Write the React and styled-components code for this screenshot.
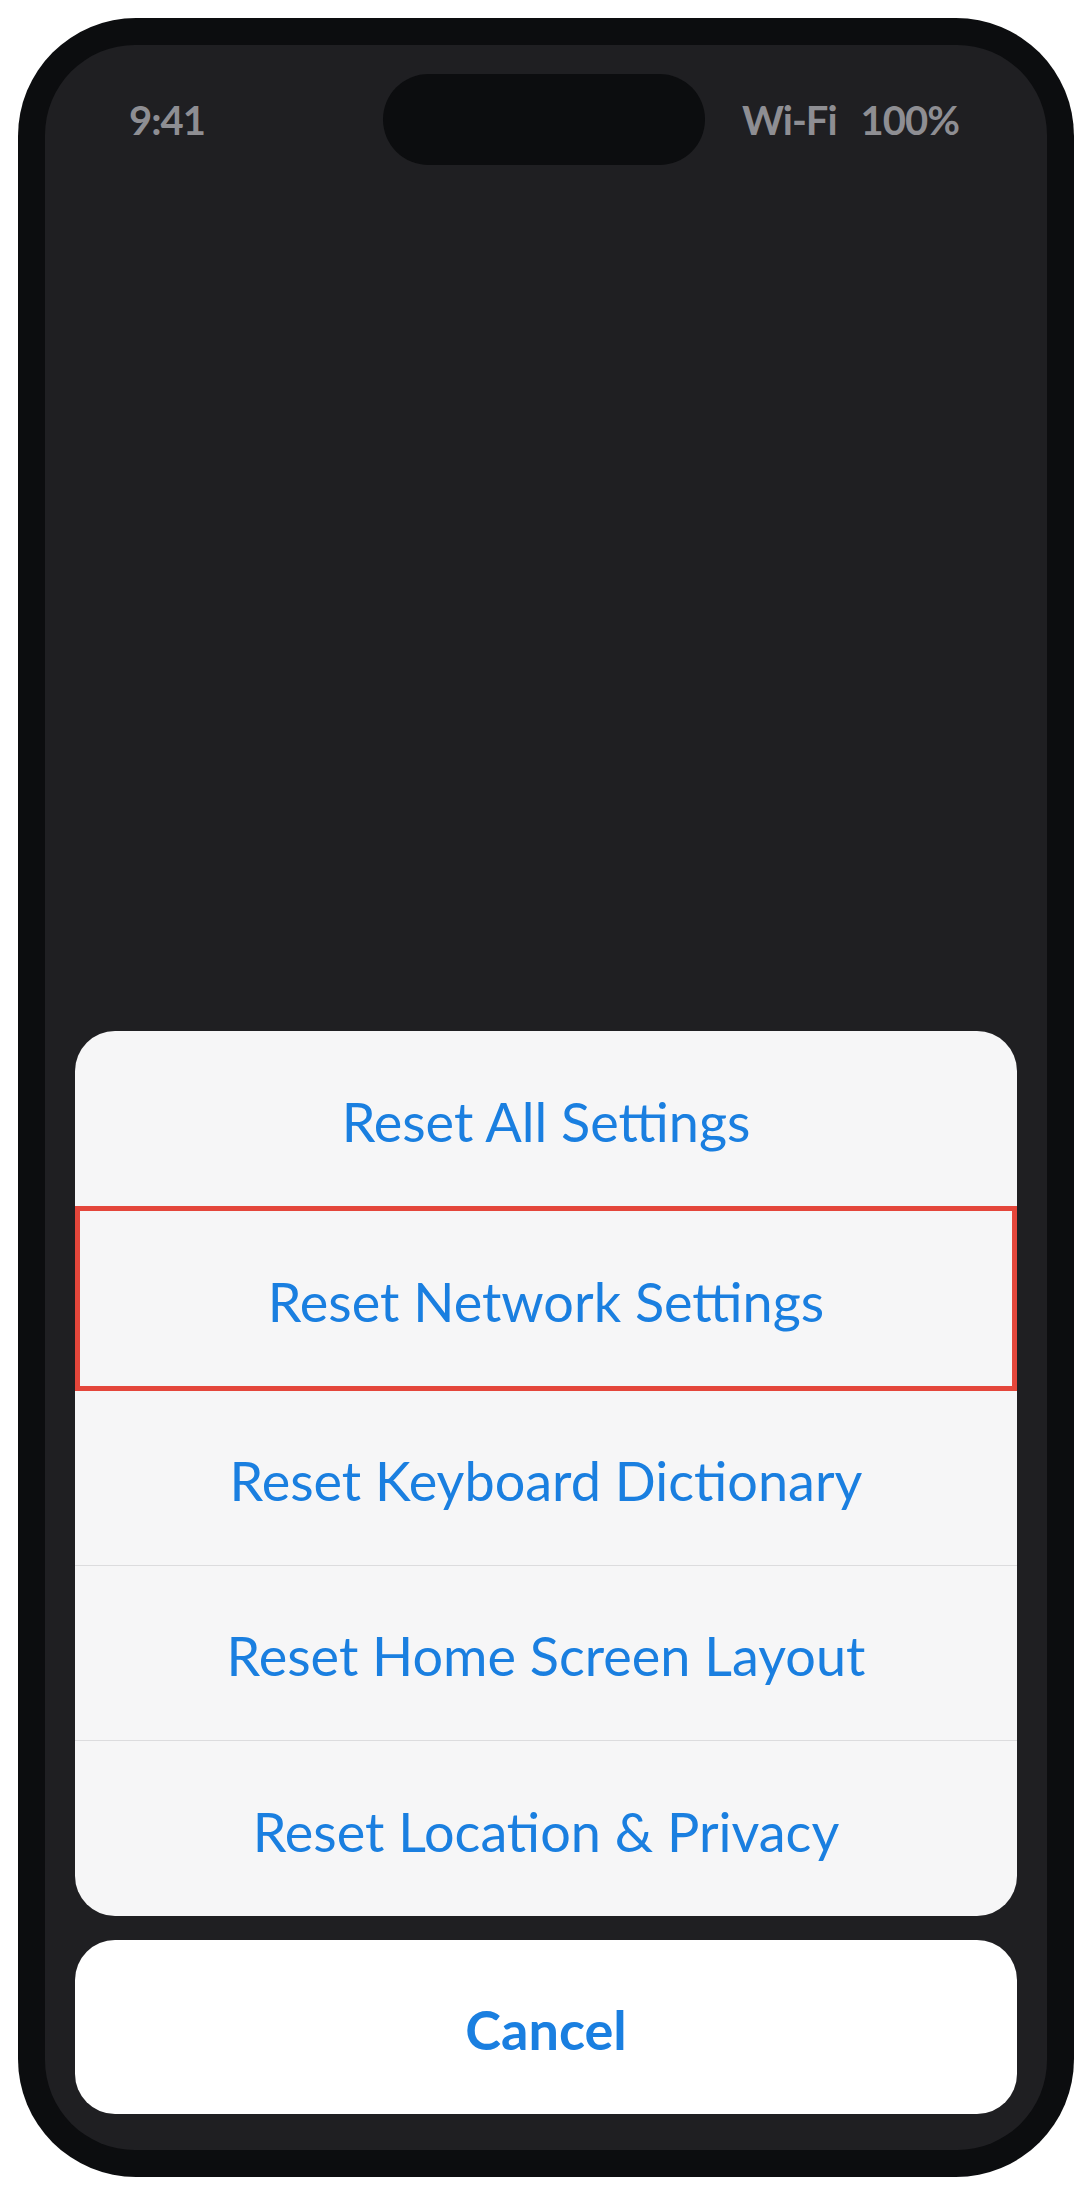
import React from "react";
import styled, { createGlobalStyle } from "styled-components";

const GlobalStyle = createGlobalStyle`
  html, body {
    margin: 0;
    padding: 0;
    background: #ffffff;
  }
  body {
    font-family: Lato, "Open Sans", "Liberation Sans", sans-serif;
  }
`;

const Page = styled.div`
  padding: 18px;
  width: 1091px;
  box-sizing: border-box;
`;

const Phone = styled.div`
  width: 1056px;
  height: 2159px;
  box-sizing: border-box;
  padding: 27px;
  background: #0c0d0f;
  border-radius: 118px;
`;

const Screen = styled.div`
  height: 100%;
  box-sizing: border-box;
  display: flex;
  flex-direction: column;
  padding: 29px 30px 36px;
  background: #1f1f22;
  border-radius: 90px;
`;

const StatusBar = styled.div`
  display: grid;
  grid-template-columns: 1fr 322px 1fr;
  align-items: center;
  height: 91px;
  padding: 0 58px 0 54px;
  color: #8e8e93;
  font-size: 40px;
  font-weight: 700;
  letter-spacing: -1px;
`;

const Island = styled.div`
  height: 91px;
  border-radius: 46px;
  background: #0c0d0f;
`;

const StatusRight = styled.div`
  display: flex;
  justify-content: flex-end;
  gap: 24px;
`;

const Spacer = styled.div`
  flex: 1;
`;

const Sheet = styled.div`
  display: flex;
  flex-direction: column;
  background: #f6f6f7;
  border-radius: 40px;
  overflow: hidden;
`;

const Action = styled.div`
  display: flex;
  align-items: center;
  justify-content: center;
  box-sizing: border-box;
  height: ${({ $selected }) => ($selected ? "185px" : "175px")};
  border: ${({ $selected }) => ($selected ? "5px solid #e4463b" : "none")};
  border-bottom: ${({ $selected, $divider }) =>
    $selected ? "5px solid #e4463b" : $divider ? "1px solid #dcdcde" : "none"};
  color: #1a7fe0;
  font-size: 54px;
  font-weight: 400;
  padding-top: 5px;
`;

const CancelButton = styled.div`
  display: flex;
  align-items: center;
  justify-content: center;
  height: 174px;
  margin-top: 24px;
  background: #ffffff;
  border-radius: 40px;
  color: #1a7fe0;
  font-size: 54px;
  font-weight: 700;
  padding-top: 5px;
  box-sizing: border-box;
`;

const actions = [
  { label: "Reset All Settings" },
  { label: "Reset Network Settings", selected: true },
  { label: "Reset Keyboard Dictionary", divider: true },
  { label: "Reset Home Screen Layout", divider: true },
  { label: "Reset Location & Privacy" },
];

export default function App() {
  return (
    <>
      <GlobalStyle />
      <Page>
        <Phone>
          <Screen>
            <StatusBar>
              <span>9:41</span>
              <Island />
              <StatusRight>
                <span>Wi-Fi</span>
                <span>100%</span>
              </StatusRight>
            </StatusBar>
            <Spacer />
            <Sheet>
              {actions.map((a) => (
                <Action key={a.label} $selected={a.selected} $divider={a.divider}>
                  {a.label}
                </Action>
              ))}
            </Sheet>
            <CancelButton>Cancel</CancelButton>
          </Screen>
        </Phone>
      </Page>
    </>
  );
}
